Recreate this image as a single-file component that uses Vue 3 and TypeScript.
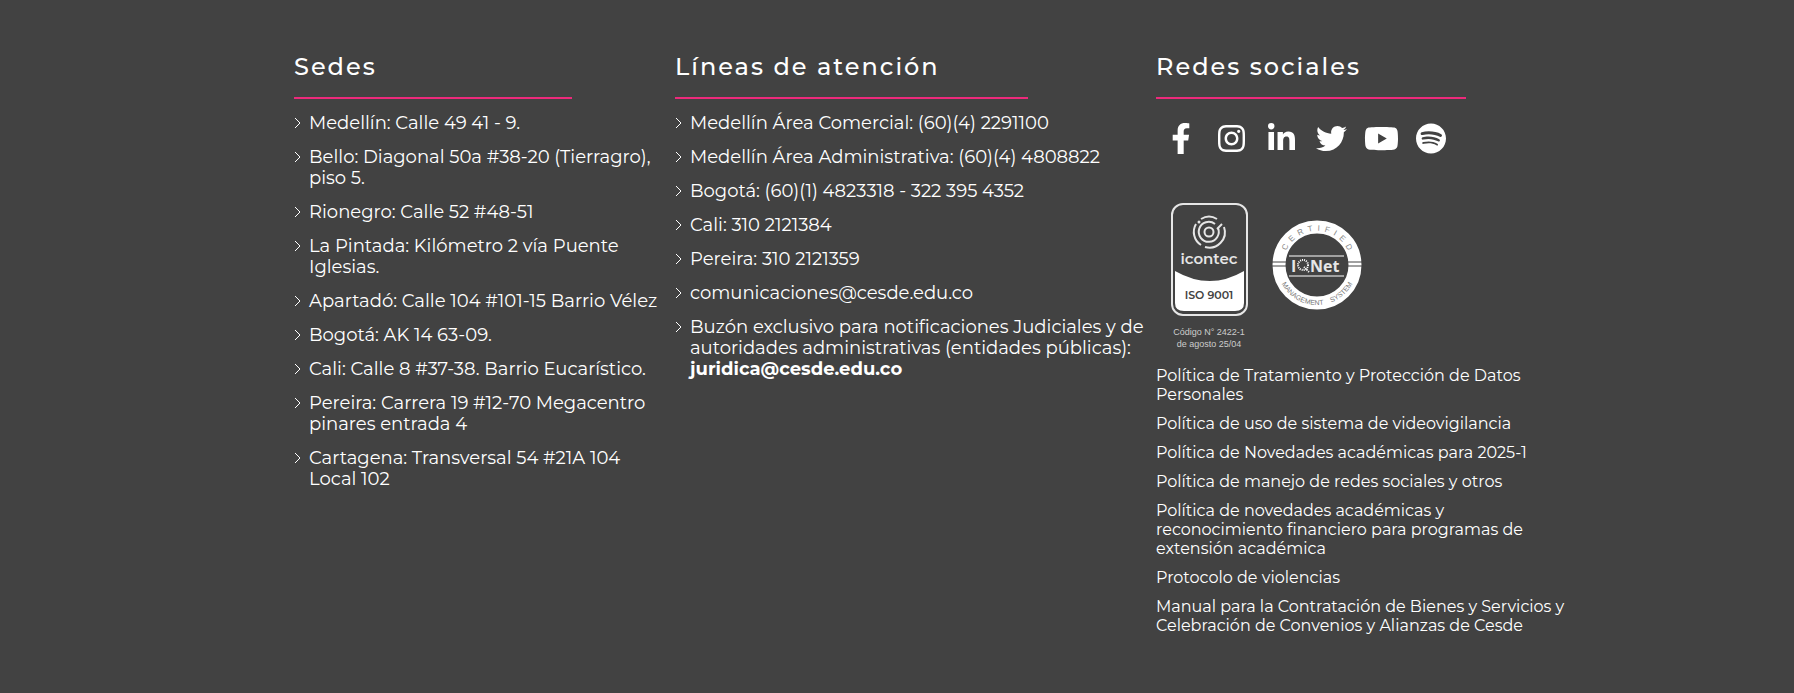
<script setup lang="ts">
interface Item { text: string; mail?: string }
interface Social { name: string; box: string; width: number; path: string }

const sedes: Item[] = [
  { text: 'Medellín: Calle 49 41 - 9.' },
  { text: 'Bello: Diagonal 50a #38-20 (Tierragro),\npiso 5.' },
  { text: 'Rionegro: Calle 52 #48-51' },
  { text: 'La Pintada: Kilómetro 2 vía Puente\nIglesias.' },
  { text: 'Apartadó: Calle 104 #101-15 Barrio Vélez' },
  { text: 'Bogotá: AK 14 63-09.' },
  { text: 'Cali: Calle 8 #37-38. Barrio Eucarístico.' },
  { text: 'Pereira: Carrera 19 #12-70 Megacentro\npinares entrada 4' },
  { text: 'Cartagena: Transversal 54 #21A 104\nLocal 102' },
]

const lineas: Item[] = [
  { text: 'Medellín Área Comercial: (60)(4) 2291100' },
  { text: 'Medellín Área Administrativa: (60)(4) 4808822' },
  { text: 'Bogotá: (60)(1) 4823318 - 322 395 4352' },
  { text: 'Cali: 310 2121384' },
  { text: 'Pereira: 310 2121359' },
  { text: 'comunicaciones@cesde.edu.co' },
  {
    text: 'Buzón exclusivo para notificaciones Judiciales y de\nautoridades administrativas (entidades públicas):\n',
    mail: 'juridica@cesde.edu.co',
  },
]

const politicas: string[] = [
  'Política de Tratamiento y Protección de Datos\nPersonales',
  'Política de uso de sistema de videovigilancia',
  'Política de Novedades académicas para 2025-1',
  'Política de manejo de redes sociales y otros',
  'Política de novedades académicas y\nreconocimiento financiero para programas de\nextensión académica',
  'Protocolo de violencias',
  'Manual para la Contratación de Bienes y Servicios y\nCelebración de Convenios y Alianzas de Cesde',
]

const redes: Social[] = [
  { name: 'Facebook', box: '0 0 320 512', width: 20, path: 'M279.14 288l14.22-92.66h-88.91v-60.13c0-25.35 12.42-50.06 52.24-50.06h40.42V6.26S260.43 0 225.36 0c-73.22 0-121.08 44.38-121.08 124.72v70.62H22.89V288h81.39v224h100.17V288z' },
  { name: 'Instagram', box: '0 0 448 512', width: 27, path: 'M224.1 141c-63.6 0-114.9 51.3-114.9 114.9s51.3 114.9 114.9 114.9S339 319.5 339 255.9 287.7 141 224.1 141zm0 189.6c-41.1 0-74.7-33.5-74.7-74.7s33.5-74.7 74.7-74.7 74.7 33.5 74.7 74.7-33.6 74.7-74.7 74.7zm146.4-194.3c0 14.9-12 26.8-26.8 26.8-14.9 0-26.8-12-26.8-26.8s12-26.8 26.8-26.8 26.8 12 26.8 26.8zm76.1 27.2c-1.7-35.9-9.9-67.7-36.2-93.9-26.2-26.2-58-34.4-93.9-36.2-37-2.1-147.9-2.1-184.9 0-35.8 1.7-67.6 9.9-93.9 36.1s-34.4 58-36.2 93.9c-2.1 37-2.1 147.9 0 184.9 1.7 35.9 9.9 67.7 36.2 93.9s58 34.4 93.9 36.2c37 2.1 147.9 2.1 184.9 0 35.9-1.7 67.7-9.9 93.9-36.2 26.2-26.2 34.4-58 36.2-93.9 2.1-37 2.1-147.8 0-184.8zM398.8 388c-7.8 19.6-22.9 34.7-42.6 42.6-29.5 11.7-99.5 9-132.1 9s-102.7 2.6-132.1-9c-19.6-7.8-34.7-22.9-42.6-42.6-11.7-29.5-9-99.5-9-132.1s-2.6-102.7 9-132.1c7.8-19.6 22.9-34.7 42.6-42.6 29.5-11.7 99.5-9 132.1-9s102.7-2.6 132.1 9c19.6 7.8 34.7 22.9 42.6 42.6 11.7 29.5 9 99.5 9 132.1s2.7 102.7-9 132.1z' },
  { name: 'LinkedIn', box: '0 0 448 512', width: 27, path: 'M100.28 448H7.4V148.9h92.88zM53.79 108.1C24.09 108.1 0 83.5 0 53.8a53.79 53.79 0 0 1 107.58 0c0 29.7-24.1 54.3-53.79 54.3zM447.9 448h-92.68V302.4c0-34.7-.7-79.2-48.29-79.2-48.29 0-55.69 37.7-55.69 76.7V448h-92.78V148.9h89.08v40.8h1.3c12.4-23.5 42.69-48.3 87.88-48.3 94 0 111.28 61.9 111.28 142.3V448z' },
  { name: 'Twitter', box: '0 0 512 512', width: 31, path: 'M459.37 151.716c.325 4.548.325 9.097.325 13.645 0 138.72-105.583 298.558-298.558 298.558-59.452 0-114.68-17.219-161.137-47.106 8.447.974 16.568 1.299 25.34 1.299 49.055 0 94.213-16.568 130.274-44.832-46.132-.975-84.792-31.188-98.112-72.772 6.498.974 12.995 1.624 19.818 1.624 9.421 0 18.843-1.3 27.614-3.573-48.081-9.747-84.143-51.98-84.143-102.985v-1.299c13.969 7.797 30.214 12.67 47.431 13.319-28.264-18.843-46.781-51.005-46.781-87.391 0-19.492 5.197-37.36 14.294-52.954 51.655 63.675 129.3 105.258 216.365 109.807-1.624-7.797-2.599-15.918-2.599-24.04 0-57.828 46.782-104.934 104.934-104.934 30.213 0 57.502 12.67 76.67 33.137 23.715-4.548 46.456-13.32 66.599-25.34-7.798 24.366-24.366 44.833-46.132 57.827 21.117-2.273 41.584-8.122 60.426-16.243-14.292 20.791-32.161 39.308-52.628 54.253z' },
  { name: 'YouTube', box: '0 0 576 512', width: 35, path: 'M549.655 124.083c-6.281-23.65-24.787-42.276-48.284-48.597C458.781 64 288 64 288 64S117.22 64 74.629 75.486c-23.497 6.322-42.003 24.947-48.284 48.597-11.412 42.867-11.412 132.305-11.412 132.305s0 89.438 11.412 132.305c6.281 23.65 24.787 41.5 48.284 47.821C117.22 448 288 448 288 448s170.78 0 213.371-11.486c23.497-6.321 42.003-24.171 48.284-47.821 11.412-42.867 11.412-132.305 11.412-132.305s0-89.438-11.412-132.305zm-317.51 213.508V175.185l142.739 81.205-142.739 81.201z' },
  { name: 'Spotify', box: '0 0 496 512', width: 30, path: 'M248 8C111.1 8 0 119.1 0 256s111.1 248 248 248 248-111.1 248-248S384.9 8 248 8zm100.7 364.9c-4.2 0-6.8-1.3-10.7-3.6-62.4-37.6-135-39.2-206.7-24.5-3.9 1-9 2.6-11.9 2.6-9.7 0-15.8-7.7-15.8-15.8 0-10.3 6.1-15.2 13.6-16.8 81.9-18.1 165.6-16.5 237 26.2 6.1 3.9 9.7 7.4 9.7 16.5s-7.1 15.4-15.2 15.4zm26.9-65.6c-5.2 0-8.7-2.3-12.3-4.2-62.5-37-155.7-51.9-238.6-29.4-4.8 1.3-7.4 2.6-11.9 2.6-10.7 0-19.4-8.7-19.4-19.4s5.2-17.8 15.5-20.7c27.8-7.8 56.2-13.6 97.8-13.6 64.9 0 127.6 16.1 177 45.5 8.1 4.8 11.3 11 11.3 19.7-.1 10.8-8.5 19.5-19.4 19.5zm31-76.2c-5.2 0-8.4-1.3-12.9-3.9-71.2-42.5-198.5-52.7-280.9-29.7-3.6 1-8.1 2.6-12.9 2.6-13.2 0-23.3-10.3-23.3-23.6 0-13.6 8.4-21.3 17.4-23.9 35.2-10.3 74.6-15.2 117.5-15.2 73 0 149.5 15.2 205.4 47.8 7.8 4.5 12.9 10.7 12.9 22.6 0 13.6-11 23.3-23.2 23.3z' },
]
</script>

<template>
  <footer class="footer">
    <div class="columns">
      <section>
        <h2>Sedes</h2>
        <ul class="list">
          <li v-for="item in sedes" :key="item.text">
            <svg class="chevron" viewBox="0 0 8 12" aria-hidden="true"><path d="M1 1l5 5-5 5" /></svg>
            <span>{{ item.text }}</span>
          </li>
        </ul>
      </section>

      <section>
        <h2>Líneas de atención</h2>
        <ul class="list">
          <li v-for="item in lineas" :key="item.text">
            <svg class="chevron" viewBox="0 0 8 12" aria-hidden="true"><path d="M1 1l5 5-5 5" /></svg>
            <span>{{ item.text }}<strong v-if="item.mail">{{ item.mail }}</strong></span>
          </li>
        </ul>
      </section>

      <section>
        <h2>Redes sociales</h2>
        <nav class="social" aria-label="Redes sociales">
          <a v-for="red in redes" :key="red.name" href="#" :aria-label="red.name">
            <svg :viewBox="red.box" :width="red.width" height="31"><path :d="red.path" /></svg>
          </a>
        </nav>

        <div class="seals">
          <svg class="icontec" viewBox="0 0 90 150" role="img" aria-label="icontec ISO 9001">
            <rect x="7" y="4" width="75" height="111" rx="11" fill="none" stroke="#e6e6e6" stroke-width="2" />
            <path d="M10 71Q45 91 79 71V103Q79 111 70 111H19Q10 111 10 103Z" fill="#fff" />
            <g fill="none" stroke="#e6e6e6" stroke-width="2">
              <circle cx="44" cy="32" r="4.500" />
              <path d="M50 24A10 10 0 1 0 53 28" />
              <path d="M36 19A15.500 15.500 0 0 1 52 19" />
              <path d="M31 24A15.500 15.500 0 0 0 36 45M40 47A15.500 15.500 0 0 0 59 27" />
              <path d="M52 29L57 24" />
            </g>
            <circle cx="34" cy="22" r="1.500" fill="#e6e6e6" />
            <text x="44" y="64" class="brand">icontec</text>
            <text x="44" y="99" class="iso">ISO 9001</text>
            <text x="44" y="135" class="code">Código N° 2422-1</text>
            <text x="44" y="147" class="code">de agosto 25/04</text>
          </svg>
          <svg class="iqnet" viewBox="0 0 90 90" role="img" aria-label="IQNet Certified Management System">
            <defs>
              <path id="arc-top" d="M12 53A34 34 0 1 1 78 53" />
              <path id="arc-bottom" d="M5 45A40 40 0 0 0 85 45" />
            </defs>
            <circle cx="45" cy="45" r="38" fill="none" stroke="#fff" stroke-width="13" />
            <path d="M0 42H18M0 46H18M72 42H90M72 46H90" stroke="#424242" stroke-width="1" />
            <path d="M17 36H72M17 56H72" stroke="#fff" stroke-width="1" />
            <text class="seal-top"><textPath href="#arc-top" startOffset="50%">C&#160; E&#160; R&#160; T&#160; I&#160; F&#160; I&#160; E&#160; D</textPath></text>
            <text class="seal-bottom"><textPath href="#arc-bottom" startOffset="50%">MANAGEMENT &#160; &#160;SYSTEM</textPath></text>
            <text x="19" y="52" class="net">I</text>
            <circle cx="31" cy="45" r="5" fill="none" stroke="#fff" stroke-width="2" stroke-dasharray="1 1" />
            <path d="M32 47l5 5" stroke="#fff" stroke-dasharray="1 1" stroke-width="2" />
            <text x="38" y="52" class="net">Net</text>
          </svg>
        </div>

        <ul class="policies">
          <li v-for="politica in politicas" :key="politica"><a href="#">{{ politica }}</a></li>
        </ul>
      </section>
    </div>
  </footer>
</template>

<style>
body {
  margin: 0;
  background: #424242;
}
</style>

<style scoped>
.footer {
  min-height: 100vh;
  box-sizing: border-box;
  padding: 51px 225px 48px 294px;
  background: #424242;
  color: #fff;
  font-family: Montserrat, Inter, "Open Sans", sans-serif;
  font-size: 18px;
  line-height: 21px;
}

.columns {
  display: grid;
  grid-template-columns: 371fr 471fr 413fr;
  gap: 10px;
}

h2 {
  display: grid;
  gap: 15px;
  margin: 0 0 14px;
  font-size: 24px;
  font-weight: 500;
  line-height: 31px;
  letter-spacing: 2px;
}

h2::after {
  content: "";
  width: 75%;
  border-bottom: 2px solid #ec2a7b;
}

ul {
  margin: 0;
  padding: 0;
  list-style: none;
  white-space: pre;
}

.list {
  display: grid;
  gap: 13px;
}

.list li {
  display: flex;
  gap: 7px;
}

.chevron {
  flex: none;
  width: 8px;
  height: 12px;
  margin-top: 4px;
  fill: none;
  stroke: #fff;
}

.social {
  display: flex;
  padding: 10px 0;
}

.social a {
  display: flex;
  justify-content: center;
  width: 50px;
}

.social svg {
  fill: #fff;
}

.seals {
  display: flex;
  gap: 17px;
  margin: 36px 0 16px 9px;
}

.icontec {
  width: 90px;
  height: 150px;
}

.iqnet {
  width: 90px;
  height: 90px;
  margin-top: 20px;
}

.seals text {
  text-anchor: middle;
  fill: #e6e6e6;
}

.seals .brand {
  font: 600 15px Montserrat, sans-serif;
}

.seals .iso {
  font: 600 11px Montserrat, sans-serif;
  fill: #424242;
}

.seals .code {
  font: 9px "Liberation Sans", sans-serif;
  fill: #ccc;
}

.seals .seal-top {
  font: 8px "Liberation Sans", sans-serif;
  fill: #888;
}

.seals .seal-bottom {
  font: 7px "Liberation Sans", sans-serif;
  fill: #777;
}

.seals .net {
  font: 700 16px "Open Sans", sans-serif;
  text-anchor: start;
}

.policies {
  display: grid;
  gap: 10px;
  font-size: 16px;
  line-height: 19px;
}

.policies a {
  display: block;
  color: #fff;
  text-decoration: none;
}
</style>
